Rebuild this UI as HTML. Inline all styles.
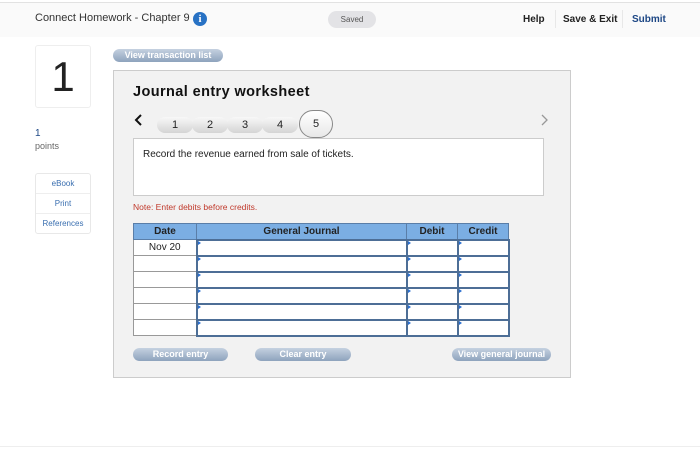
<!DOCTYPE html>
<html><head><style>
*{margin:0;padding:0;box-sizing:border-box}
body{width:700px;height:453px;background:#fff;font-family:"Liberation Sans",sans-serif;position:relative;overflow:hidden;color:#222}
.a{position:absolute}
.hdr{left:0;top:2px;width:700px;height:35px;background:#fafafa;border-top:1px solid #e2e2e2}
.btn{position:absolute;height:13px;border-radius:7px;background:linear-gradient(#c5d1e0,#8ea3bd);color:#fff;font-size:9px;font-weight:bold;text-align:center;line-height:13px}
.tab{position:absolute;top:117px;height:16px;width:36px;border-radius:8px;background:linear-gradient(#f8f8f8,#d4d4d4);font-size:11px;text-align:center;line-height:16px}
table{position:absolute;left:133px;top:223px;border-collapse:collapse;font-size:10px}
td,th{height:16px;border:1px solid #999}
th{background:#7baee3;font-weight:bold;color:#222;border-color:#5a7ea8}
td{background:#fff}
td.i{border:2px solid #4d6e96;position:relative}
td.i:before{content:"";position:absolute;left:0;top:0;border-left:3px solid #2a6fd0;border-top:2px solid transparent;border-bottom:2px solid transparent}
</style></head><body>
<div class="a hdr"></div>
<div class="a" style="left:35px;top:12px;font-size:11px;color:#333">Connect Homework - Chapter 9</div>
<div class="a" style="left:193px;top:12px;width:14px;height:14px;border-radius:50%;background:#2872c4;color:#fff;font-size:11px;font-weight:bold;text-align:center;line-height:14px;font-family:'Liberation Serif',serif">i</div>
<div class="a" style="left:328px;top:11px;width:48px;height:17px;border-radius:9px;background:#e3e3e6;font-size:8px;color:#555;text-align:center;line-height:17px">Saved</div>
<div class="a" style="left:523px;top:14px;font-size:10px;font-weight:bold">Help</div>
<div class="a" style="left:555px;top:10px;width:1px;height:18px;background:#e8e8e8"></div>
<div class="a" style="left:563px;top:14px;font-size:10px;font-weight:bold">Save &amp; Exit</div>
<div class="a" style="left:622px;top:10px;width:1px;height:18px;background:#e8e8e8"></div>
<div class="a" style="left:632px;top:14px;font-size:10px;font-weight:bold;color:#1d4785">Submit</div>

<div class="a" style="left:35px;top:45px;width:56px;height:63px;border:1px solid #eee;border-radius:3px;font-size:42px;text-align:center;line-height:62px">1</div>
<div class="a" style="left:35px;top:128px;font-size:10px;color:#1d4785">1</div>
<div class="a" style="left:35px;top:141px;font-size:9px;color:#666">points</div>
<div class="a" style="left:35px;top:173px;width:56px;height:61px;border:1px solid #e8e8e8;border-radius:3px;font-size:8px;color:#3a6fb0;text-align:center">
<div style="height:20px;line-height:20px;border-bottom:1px solid #eee">eBook</div>
<div style="height:20px;line-height:20px;border-bottom:1px solid #eee">Print</div>
<div style="height:19px;line-height:19px">References</div></div>

<div class="btn" style="left:113px;top:49px;width:110px">View transaction list</div>
<div class="a" style="left:113px;top:70px;width:458px;height:308px;background:#f2f2f2;border:1px solid #ccc"></div>
<div class="a" style="left:133px;top:84px;font-size:14.5px;font-weight:bold;color:#111;letter-spacing:0.4px">Journal entry worksheet</div>
<svg class="a" style="left:134px;top:114px" width="10" height="14"><path d="M7 1 L2 6 L7 11" stroke="#111" stroke-width="2" fill="none"/></svg>
<svg class="a" style="left:540px;top:114px" width="10" height="14"><path d="M2 1 L7 6 L2 11" stroke="#999" stroke-width="1.3" fill="none"/></svg>
<div class="tab" style="left:157px">1</div>
<div class="tab" style="left:192px">2</div>
<div class="tab" style="left:227px">3</div>
<div class="tab" style="left:262px">4</div>
<div class="a" style="left:299px;top:110px;width:34px;height:28px;border-radius:14px;border:1px solid #888;background:linear-gradient(#fff,#e8e8e8);font-size:11px;text-align:center;line-height:26px">5</div>
<div class="a" style="left:133px;top:138px;width:411px;height:58px;background:#fff;border:1px solid #ccc;font-size:10px;padding:10px 9px">Record the revenue earned from sale of tickets.</div>
<div class="a" style="left:133px;top:202px;font-size:8.5px;color:#c0392b">Note: Enter debits before credits.</div>
<table>
<tr><th style="width:63px">Date</th><th style="width:210px">General Journal</th><th style="width:51px">Debit</th><th style="width:51px">Credit</th></tr>
<tr><td style="text-align:center">Nov 20</td><td class="i"></td><td class="i"></td><td class="i"></td></tr>
<tr><td></td><td class="i"></td><td class="i"></td><td class="i"></td></tr>
<tr><td></td><td class="i"></td><td class="i"></td><td class="i"></td></tr>
<tr><td></td><td class="i"></td><td class="i"></td><td class="i"></td></tr>
<tr><td></td><td class="i"></td><td class="i"></td><td class="i"></td></tr>
<tr><td></td><td class="i"></td><td class="i"></td><td class="i"></td></tr>
</table>
<div class="btn" style="left:133px;top:348px;width:95px">Record entry</div>
<div class="btn" style="left:255px;top:348px;width:96px">Clear entry</div>
<div class="btn" style="left:452px;top:348px;width:99px">View general journal</div>
<div class="a" style="left:0;top:446px;width:700px;height:1px;background:#eee"></div>
</body></html>
